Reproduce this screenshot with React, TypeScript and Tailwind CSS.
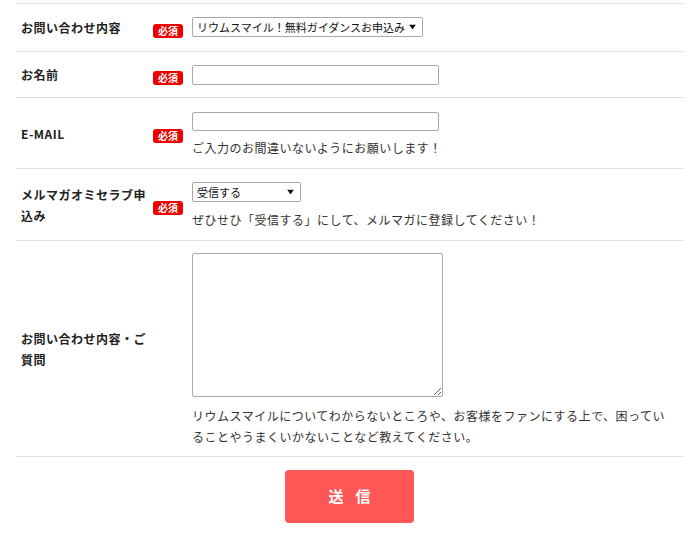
import React from 'react'

const font = { fontFamily: '"Noto Sans CJK JP", "Noto Sans", sans-serif' }

function Badge() {
  return (
    <span className="inline-flex items-center justify-center w-[30px] h-[14px] rounded-[3px] bg-[#ee0000] text-white text-[10px] font-bold leading-none">
      必須
    </span>
  )
}

function Row({
  label,
  required,
  children,
  className,
}: {
  label: React.ReactNode
  required?: boolean
  children: React.ReactNode
  className?: string
}) {
  return (
    <div className="flex items-center border-b border-[#dddddd]">
      <div className="w-[137px] pl-[5px] text-[12px] tracking-[0.5px] font-bold text-[#222] leading-[21px]">
        {label}
      </div>
      <div className="w-[39px]">{required && <Badge />}</div>
      <div className={'flex-1 pr-[10px] ' + (className ?? '')}>{children}</div>
    </div>
  )
}

function Select({ value, width }: { value: string; width: string }) {
  return (
    <div className={'relative flex items-center h-[20px] ' + width}>
      <select
        defaultValue={value}
        className="appearance-none block w-full h-[20px] border border-[#a9a9a9] rounded-[2px] bg-white pl-[4px] pr-[12px] text-[11px] text-[#111] leading-[18px] outline-none"
      >
        <option>{value}</option>
      </select>
      <svg
        className="absolute right-[7px] top-1/2 -translate-y-1/2 pointer-events-none"
        width="7"
        height="5"
        viewBox="0 0 7 5"
      >
        <path d="M0 0 H7 L3.5 5 Z" fill="#111" />
      </svg>
    </div>
  )
}

export default function App() {
  return (
    <div className="bg-white min-h-screen pt-[3px] pl-[16px] pr-[17px]" style={font}>
      <div className="border-t border-[#dddddd]">
        <Row label="お問い合わせ内容" required className="pt-[13px] pb-[14px]">
          <Select value="リウムスマイル！無料ガイダンスお申込み" width="w-[231px]" />
        </Row>

        <Row label="お名前" required className="pt-[13px] pb-[12px]">
          <input type="text" className="block w-[247px] h-[20px] border border-[#aaaaaa] rounded-[2px] bg-white outline-none" />
        </Row>

        <Row label="E-MAIL" required className="pt-[14px] pb-[10px]">
          <input type="text" className="block w-[247px] h-[19px] border border-[#aaaaaa] rounded-[2px] bg-white outline-none" />
          <p className="mt-[7px] text-[12px] tracking-[0.5px] leading-[20px] text-[#333]">
            ご入力のお間違いないようにお願いします！
          </p>
        </Row>

        <Row label="メルマガオミセラブ申込み" required className="pt-[13px] pb-[10px]">
          <Select value="受信する" width="w-[109px]" />
          <p className="mt-[8px] text-[12px] tracking-[0.5px] leading-[20px] text-[#333]">
            ぜひせひ「受信する」にして、メルマガに登録してください！
          </p>
        </Row>

        <Row label="お問い合わせ内容・ご質問" className="pt-[12px] pb-[9px]">
          <textarea className="block w-[251px] h-[144px] border border-[#aaaaaa] rounded-[2px] bg-white outline-none" />
          <p className="mt-[8px] text-[12px] tracking-[0.5px] leading-[21px] text-[#333]">
            リウムスマイルについてわからないところや、お客様をファンにする上で、困っていることやうまくいかないことなど教えてください。
          </p>
        </Row>
      </div>

      <div className="flex justify-center pt-[13px]">
        <button
          type="button"
          className="w-[129px] h-[53px] rounded-[4px] bg-[#ff5656] text-white text-[15px] font-bold tracking-[12px] pl-[12px]"
        >
          送信
        </button>
      </div>
    </div>
  )
}
